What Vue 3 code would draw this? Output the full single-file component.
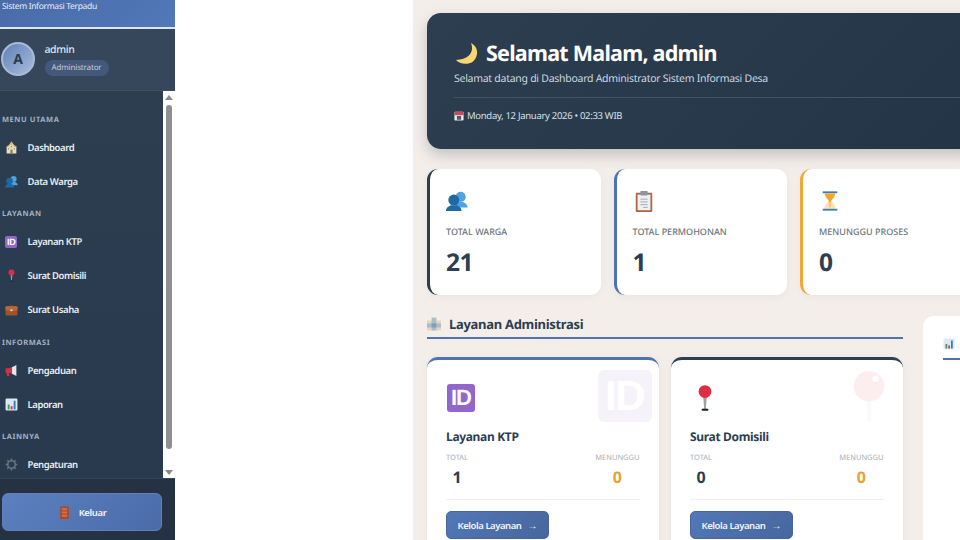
<script setup>
const groups = [
  { title: 'MENU UTAMA', items: [{ icon: 'house', label: 'Dashboard' }, { icon: 'people', label: 'Data Warga' }] },
  { title: 'LAYANAN', items: [{ id: true, label: 'Layanan KTP' }, { icon: 'pin', label: 'Surat Domisili' }, { icon: 'case', label: 'Surat Usaha' }] },
  { title: 'INFORMASI', items: [{ icon: 'mega', label: 'Pengaduan' }, { icon: 'chart', label: 'Laporan' }] },
  { title: 'LAINNYA', items: [{ icon: 'gear', label: 'Pengaturan' }] }
]
const stats = [
  { icon: 'people', label: 'TOTAL WARGA', value: '21', tone: 'navy' },
  { icon: 'clip', label: 'TOTAL PERMOHONAN', value: '1', tone: 'blue' },
  { icon: 'glass', label: 'MENUNGGU PROSES', value: '0', tone: 'amber' }
]
const services = [
  { name: 'Layanan KTP', total: '1', wait: '0', id: true, tone: 'blue' },
  { name: 'Surat Domisili', total: '0', wait: '0', icon: 'pin', tone: 'navy' }
]
</script>

<template>
  <div class="page">
    <svg class="sprite" width="0" height="0" aria-hidden="true">
      <defs>
        <symbol id="house" viewBox="0 0 24 24">
          <path d="M12 1 8 7 3 10v13h18V10l-5-3z" fill="#efe0b4"/>
          <path d="M12 1 8 7h8z" fill="#d8b765"/>
          <path d="M3 10l5-3 1 2-6 3zM21 10l-5-3-1 2 6 3z" fill="#c9a24e"/>
          <rect x="10" y="16" width="4" height="7" fill="#8f7a5a"/>
          <rect x="5.500" y="13" width="2.500" height="3" fill="#7fa5c4"/>
          <rect x="16" y="13" width="2.500" height="3" fill="#7fa5c4"/>
          <rect x="10.500" y="9" width="3" height="3" fill="#7fa5c4"/>
        </symbol>
        <symbol id="people" viewBox="0 0 24 24">
          <circle cx="16" cy="7.500" r="5.500" fill="#4fa3e0"/>
          <path d="M10 19c0-3 2-5 3.500-6h5c2 1 5 2.500 5 6z" fill="#4fa3e0"/>
          <circle cx="8.500" cy="11" r="6" fill="#1f6aa5"/>
          <path d="M0 23c0-4 3-5 5-6.500h7c2 1.500 5 2.500 5 6.500z" fill="#1f6aa5"/>
        </symbol>
        <symbol id="pin" viewBox="0 0 24 24">
          <path d="M10.300 9h3.400L12.700 21h-1.400z" fill="#98a3aa"/>
          <ellipse cx="12" cy="22" rx="3" ry="1" fill="#222"/>
          <circle cx="12" cy="6.500" r="5.500" fill="#dd2e44"/>
        </symbol>
        <symbol id="pinw" viewBox="0 0 24 24">
          <rect x="11" y="14" width="2" height="10" fill="#c9ced3"/>
          <circle cx="12" cy="7.500" r="7" fill="#dd2e44"/>
          <circle cx="15" cy="4" r="1.500" fill="#fff"/>
        </symbol>
        <symbol id="case" viewBox="0 0 24 24">
          <path d="M8 7V3h8v4h-2V5h-4v2z" fill="#6b3d1f"/>
          <rect x="1" y="6" width="22" height="17" rx="2" fill="#a0522d"/>
          <rect x="1" y="6" width="22" height="8" rx="2" fill="#b9683a"/>
          <rect x="10" y="12" width="4" height="3" fill="#f1d9a8"/>
        </symbol>
        <symbol id="mega" viewBox="0 0 24 24">
          <path d="M1 8h7l6-3v14l-6-3H7l1 6H4l-1-6H1z" fill="#dd2e44"/>
          <path d="M13 6l8-4v20l-8-4z" fill="#e6e7e8"/>
        </symbol>
        <symbol id="chart" viewBox="0 0 24 24">
          <rect x="1" y="1" width="22" height="22" rx="2" fill="#dde8f2"/>
          <rect x="5" y="12" width="3.500" height="9" fill="#3f9b5f"/>
          <rect x="10.500" y="15" width="3.500" height="6" fill="#d6403f"/>
          <rect x="16" y="5" width="3.500" height="16" fill="#2f7fc1"/>
        </symbol>
        <symbol id="gear" viewBox="0 0 24 24">
          <circle cx="12" cy="12" r="7" fill="none" stroke="#66727e" stroke-width="3"/>
          <path d="M12 1v5M12 18v5M1 12h5M18 12h5M4.200 4.200l3.600 3.600M16.200 16.200l3.600 3.600M19.800 4.200l-3.600 3.600M7.800 16.200l-3.600 3.600" stroke="#66727e" stroke-width="3"/>
        </symbol>
        <symbol id="door" viewBox="0 0 24 24">
          <rect x="4" y="1" width="16" height="23" rx="1" fill="#a8492e"/>
          <rect x="7" y="4" width="10" height="4" fill="#cf7048"/>
          <rect x="7" y="10" width="10" height="4" fill="#cf7048"/>
          <rect x="7" y="16" width="10" height="4" fill="#cf7048"/>
        </symbol>
        <symbol id="moon" viewBox="0 0 24 24">
          <path d="M17 1c3 7 0 16-15 17 4 5 19 7 21-6 .7-5-2-9-6-11z" fill="#f7d774"/>
        </symbol>
        <symbol id="cal" viewBox="0 0 24 24">
          <rect x="1" y="2" width="22" height="21" rx="2" fill="#e8eaed"/>
          <rect x="1" y="2" width="22" height="8" rx="2" fill="#c9495e"/>
          <rect x="7" y="12" width="10" height="9" fill="#4a5a6a"/>
        </symbol>
        <symbol id="clip" viewBox="0 0 24 24">
          <rect x="3" y="3" width="18" height="21" rx="1" fill="#b5654a"/>
          <rect x="5" y="5" width="14" height="17" fill="#eef1f3"/>
          <rect x="8" y="1" width="8" height="5" rx="1" fill="#8a97a1"/>
          <path d="M8 10h8M8 13h8M8 16h8M11 19h5" stroke="#9aa7b2" stroke-width="1"/>
        </symbol>
        <symbol id="glass" viewBox="0 0 24 24">
          <path d="M6 3h12c0 6-4 7-4 9s4 3 4 9H6c0-6 4-7 4-9s-4-3-4-9z" fill="#fbe3b5"/>
          <path d="M6.500 4h11c-.5 5-4.500 6-5 9h-1c-.5-3-4.500-4-5-9z" fill="#f5a623"/>
          <path d="M12 12v7" stroke="#f5a623"/>
          <rect x="4" y="1.500" width="16" height="2" fill="#3f7fae"/>
          <rect x="4" y="20.500" width="16" height="2" fill="#3f7fae"/>
        </symbol>
        <symbol id="office" viewBox="0 0 24 24">
          <rect x="0" y="6" width="24" height="17" fill="#e6d6ba"/>
          <rect x="0" y="11" width="24" height="7" fill="#a3bfd6"/>
          <rect x="8" y="1" width="8" height="22" fill="#aebbc4"/>
          <rect x="8" y="11" width="8" height="7" fill="#7f9fb8"/>
        </symbol>
      </defs>
    </svg>

    <aside class="sidebar">
      <div class="brand">Sistem Informasi Terpadu</div>
      <div class="user">
        <div class="avatar">A</div>
        <div class="user-text">
          <div class="user-name">admin</div>
          <div class="user-role">Administrator</div>
        </div>
      </div>
      <div class="nav-wrap">
        <nav class="nav">
          <div v-for="g in groups" :key="g.title" class="nav-group">
            <div class="nav-title">{{ g.title }}</div>
            <div v-for="item in g.items" :key="item.label" class="nav-item">
              <span class="nav-icon">
                <span v-if="item.id" class="id-badge id-small">ID</span>
                <svg v-else class="ico-12"><use :href="'#' + item.icon"/></svg>
              </span>
              <span>{{ item.label }}</span>
            </div>
          </div>
        </nav>
        <div class="scrollbar">
          <span class="arrow-up"></span>
          <span class="thumb"></span>
          <span class="arrow-down"></span>
        </div>
      </div>
      <div class="side-foot">
        <button class="logout">
          <svg class="ico-12"><use href="#door"/></svg>
          <span>Keluar</span>
        </button>
      </div>
    </aside>

    <div class="gap"></div>

    <main class="main">
      <section class="hero">
        <h1 class="hero-title">
          <svg class="ico-moon"><use href="#moon"/></svg>
          <span>Selamat Malam, admin</span>
        </h1>
        <p class="hero-sub">Selamat datang di Dashboard Administrator Sistem Informasi Desa</p>
        <div class="hero-date">
          <svg class="ico-10"><use href="#cal"/></svg>
          <span>Monday, 12 January 2026 • 02:33 WIB</span>
        </div>
      </section>

      <section class="stats">
        <div v-for="s in stats" :key="s.label" class="stat" :class="s.tone">
          <svg class="ico-22"><use :href="'#' + s.icon"/></svg>
          <div class="stat-label">{{ s.label }}</div>
          <div class="stat-value">{{ s.value }}</div>
        </div>
      </section>

      <section class="columns">
        <div class="left-col">
          <h2 class="section-title">
            <svg class="ico-14"><use href="#office"/></svg>
            <span>Layanan Administrasi</span>
          </h2>
          <div class="services">
            <div v-for="c in services" :key="c.name" class="service" :class="c.tone">
              <div class="service-icon">
                <span v-if="c.id" class="id-badge id-mid">ID</span>
                <svg v-else class="ico-28"><use :href="'#' + c.icon"/></svg>
              </div>
              <div class="watermark">
                <span v-if="c.id" class="id-badge id-big">ID</span>
                <svg v-else class="ico-54"><use href="#pinw"/></svg>
              </div>
              <div class="service-name">{{ c.name }}</div>
              <div class="service-stats">
                <div class="svc-stat">
                  <div class="svc-label">TOTAL</div>
                  <div class="svc-value">{{ c.total }}</div>
                </div>
                <div class="svc-stat">
                  <div class="svc-label">MENUNGGU</div>
                  <div class="svc-value wait">{{ c.wait }}</div>
                </div>
              </div>
              <button class="manage"><span>Kelola Layanan</span><span class="arr">→</span></button>
            </div>
          </div>
        </div>
        <div class="right-card">
          <div class="right-head"><svg class="ico-12b"><use href="#chart"/></svg></div>
        </div>
      </section>
    </main>
  </div>
</template>

<style>
html, body { margin: 0; overflow: hidden; }
</style>

<style scoped>
.page {
  width: 960px;
  height: 540px;
  display: flex;
  overflow: hidden;
  background: #fff;
  font-family: "Noto Sans", sans-serif;
  text-rendering: geometricPrecision;
  color: #2c3e50;
}
.sprite { position: absolute; }
.sidebar {
  width: 175px;
  flex: none;
  display: flex;
  flex-direction: column;
  background: #2c3e50;
  color: #ecf0f1;
}
.brand {
  box-sizing: border-box;
  padding: 1px 0 0 2px;
  font-size: 8.500px;
  line-height: 12px;
  letter-spacing: -.33px;
  color: #e6edf7;
  background: linear-gradient(135deg, #4a6ba8, #5278b8);
  border-bottom: 2px solid #dfe6f0;
  flex: none;
  height: 29px;
}
.user {
  height: 62px;
  box-sizing: border-box;
  flex: none;
  display: flex;
  align-items: center;
  gap: 9.500px;
  padding: 0 0 1px 1px;
  background: #36475c;
  border-bottom: 1px solid #3e5066;
}
.avatar {
  width: 34px;
  height: 34px;
  border-radius: 50%;
  box-sizing: border-box;
  border: 2px solid #a9bbd4;
  display: flex;
  align-items: center;
  justify-content: center;
  font-size: 14px;
  font-weight: 700;
  color: #2c3e50;
  background: linear-gradient(135deg, #5f80b8, #a9bddb);
}
.user-name { font-size: 10.500px; line-height: 14px; letter-spacing: -.4px; color: #dfe6ee; font-weight: 500; }
.user-role {
  margin-top: 3px;
  display: block;
  width: fit-content;
  padding: 0 7px;
  font-size: 8px;
  line-height: 16px;
  letter-spacing: -.15px;
  border-radius: 8px;
  color: #c2cede;
  background: #43587a;
}
.nav-wrap { flex: 1; min-height: 0; display: flex; background: linear-gradient(180deg, #2c3e50, #293a4f); }
.nav { flex: 1; padding: 21.500px 0 0 2px; overflow: hidden; }
.nav-group { margin-bottom: 9px; }
.nav-title {
  font-size: 7.500px;
  font-weight: 700;
  line-height: 14px;
  letter-spacing: .55px;
  color: #a3b1c2;
  margin-bottom: 3.500px;
}
.nav-item {
  height: 34px;
  display: flex;
  align-items: center;
  font-size: 9.500px;
  letter-spacing: -.42px;
  font-weight: 600;
  color: #e8edf2;
}
.nav-icon { width: 25.500px; display: flex; justify-content: center; padding-right: 7px; box-sizing: border-box; flex: none; }
.ico-12 { width: 13px; height: 13px; }
.scrollbar {
  width: 12px;
  flex: none;
  background: #fff;
  display: flex;
  flex-direction: column;
  align-items: center;
  padding: 4px 0 3px;
  box-sizing: border-box;
}
.arrow-up { width: 0; height: 0; border: 4px solid transparent; border-top: 0; border-bottom: 5px solid #8a8a8a; }
.arrow-down { width: 0; height: 0; border: 4px solid transparent; border-bottom: 0; border-top: 5px solid #8a8a8a; }
.thumb { flex: 1; width: 6px; margin: 5px 0 21px; border-radius: 3px; background: #8f8f8f; }
.side-foot {
  height: 62px;
  box-sizing: border-box;
  flex: none;
  padding: 14px 13px 0 2px;
  background: #243244;
  border-top: 1px solid #33455a;
}
.logout {
  width: 100%;
  height: 38px;
  display: flex;
  align-items: center;
  justify-content: center;
  gap: 8px;
  border: 1px solid #5f82bd;
  border-radius: 6px;
  background: linear-gradient(135deg, #5c80bf, #4a6ba8);
  color: #f2f5f9;
  font: 600 9.500px "Noto Sans", sans-serif;
  letter-spacing: -.4px;
}
.gap { width: 238px; flex: none; }
.main {
  flex: 1;
  min-width: 0;
  padding: 13px 0 0 14px;
  background: #f3eeea;
}
.hero {
  width: 600px;
  height: 136px;
  box-sizing: border-box;
  padding: 23px 27px 0 27px;
  border-radius: 14px;
  color: #fff;
  background: linear-gradient(135deg, #2c3e50, #243447);
  box-shadow: 0 6px 14px rgba(44, 62, 80, .25);
}
.hero-title {
  margin: 0;
  display: flex;
  align-items: center;
  gap: 8px;
  font-size: 21.500px;
  letter-spacing: -.75px;
  line-height: 35px;
  font-weight: 700;
}
.ico-moon { width: 24px; height: 24px; }
.hero-sub {
  margin: 0;
  font-size: 10.500px;
  letter-spacing: -.27px;
  line-height: 16px;
  padding-bottom: 10px;
  border-bottom: 1px solid #40536a;
  color: #ccd6e0;
}
.hero-date {
  display: flex;
  align-items: center;
  gap: 3px;
  margin-top: 11px;
  font-size: 9.500px;
  letter-spacing: -.3px;
  line-height: 14px;
  color: #d8e0e8;
}
.ico-10 { width: 10px; height: 10px; }
.stats {
  margin-top: 20px;
  display: flex;
  gap: 13px;
  width: 600px;
}
.stat {
  width: 173.500px;
  height: 126px;
  flex: none;
  box-sizing: border-box;
  padding: 20px 0 0 16px;
  background: #fff;
  border-radius: 11px;
  border-left: 3px solid #2c3e50;
  box-shadow: 0 2px 8px rgba(0, 0, 0, .04);
}
.stat.blue { border-left-color: #4f73ae; }
.stat.amber { border-left-color: #f0a830; }
.ico-22 { width: 22px; height: 24px; display: block; }
.stat-label { margin-top: 12px; font-size: 9px; line-height: 14px; color: #6c757d; font-weight: 500; }
.stat-value { margin-top: 7px; font-size: 24.500px; letter-spacing: -.5px; line-height: 34px; font-weight: 700; color: #2c3e50; }
.columns { display: flex; gap: 20px; margin-top: 21px; width: 700px; }
.left-col { width: 476px; flex: none; }
.section-title {
  margin: -2px 0 0;
  padding-bottom: 3px;
  display: flex;
  align-items: center;
  gap: 8px;
  font-size: 13px;
  letter-spacing: -.3px;
  line-height: 20px;
  font-weight: 700;
  color: #2c3e50;
  border-bottom: 2px solid #4f73ae;
}
.ico-14 { width: 14px; height: 14px; }
.services { display: flex; gap: 12.500px; margin-top: 18px; }
.service {
  position: relative;
  width: 231.500px;
  height: 240px;
  flex: none;
  box-sizing: border-box;
  padding: 24px 19px 0;
  background: #fff;
  border-radius: 11px;
  border-top: 3px solid #4f73ae;
  box-shadow: 0 2px 10px rgba(0, 0, 0, .05);
}
.service.navy { border-top-color: #2c3e50; }
.service-icon { height: 28px; width: 28px; display: flex; justify-content: center; margin-left: 1px; }
.ico-28 { width: 28px; height: 28px; }
.watermark { position: absolute; top: 10px; right: 7px; width: 54px; height: 52px; opacity: .08; }
.ico-54 { width: 54px; height: 52px; }
.id-badge {
  display: flex;
  align-items: center;
  justify-content: center;
  background: #9266cc;
  color: #fff;
  font-family: "Liberation Sans", sans-serif;
  font-weight: 700;
  letter-spacing: -.04em;
}
.id-small { width: 12px; height: 12px; border-radius: 2px; font-size: 9px; }
.id-mid { width: 28px; height: 28px; border-radius: 3px; font-size: 22px; }
.id-big { width: 54px; height: 52px; border-radius: 6px; font-size: 42px; }
.service-name { margin-top: 16px; font-size: 12px; letter-spacing: -.33px; line-height: 18px; font-weight: 700; color: #2c3e50; }
.service-stats {
  display: flex;
  justify-content: space-between;
  margin-top: 6px;
  padding-bottom: 12px;
  border-bottom: 1px solid #f1f1f1;
}
.svc-stat { text-align: center; }
.svc-label { font-size: 7.500px; line-height: 12px; color: #a8adb3; }
.svc-value { margin-top: 3px; font-size: 16px; line-height: 20px; font-weight: 700; color: #2c3e50; }
.svc-value.wait { color: #e8a02e; }
.manage {
  margin-top: 11px;
  width: 103px;
  height: 28px;
  padding: 0;
  display: flex;
  align-items: center;
  justify-content: center;
  gap: 6px;
  border: 1px solid #47669e;
  border-radius: 5px;
  background: linear-gradient(135deg, #5278b8, #47669e);
  color: #f2f5f9;
  font: 600 9.500px "Noto Sans", sans-serif;
  letter-spacing: -.45px;
}
.arr { font-size: 10px; letter-spacing: 0; }
.right-card {
  flex: 1;
  height: 300px;
  box-sizing: border-box;
  padding: 17px 0 0 20px;
  background: #fff;
  border-radius: 11px;
}
.right-head { height: 25px; border-bottom: 2px solid #4f73ae; }
.ico-12b { width: 12px; height: 12px; }
</style>
